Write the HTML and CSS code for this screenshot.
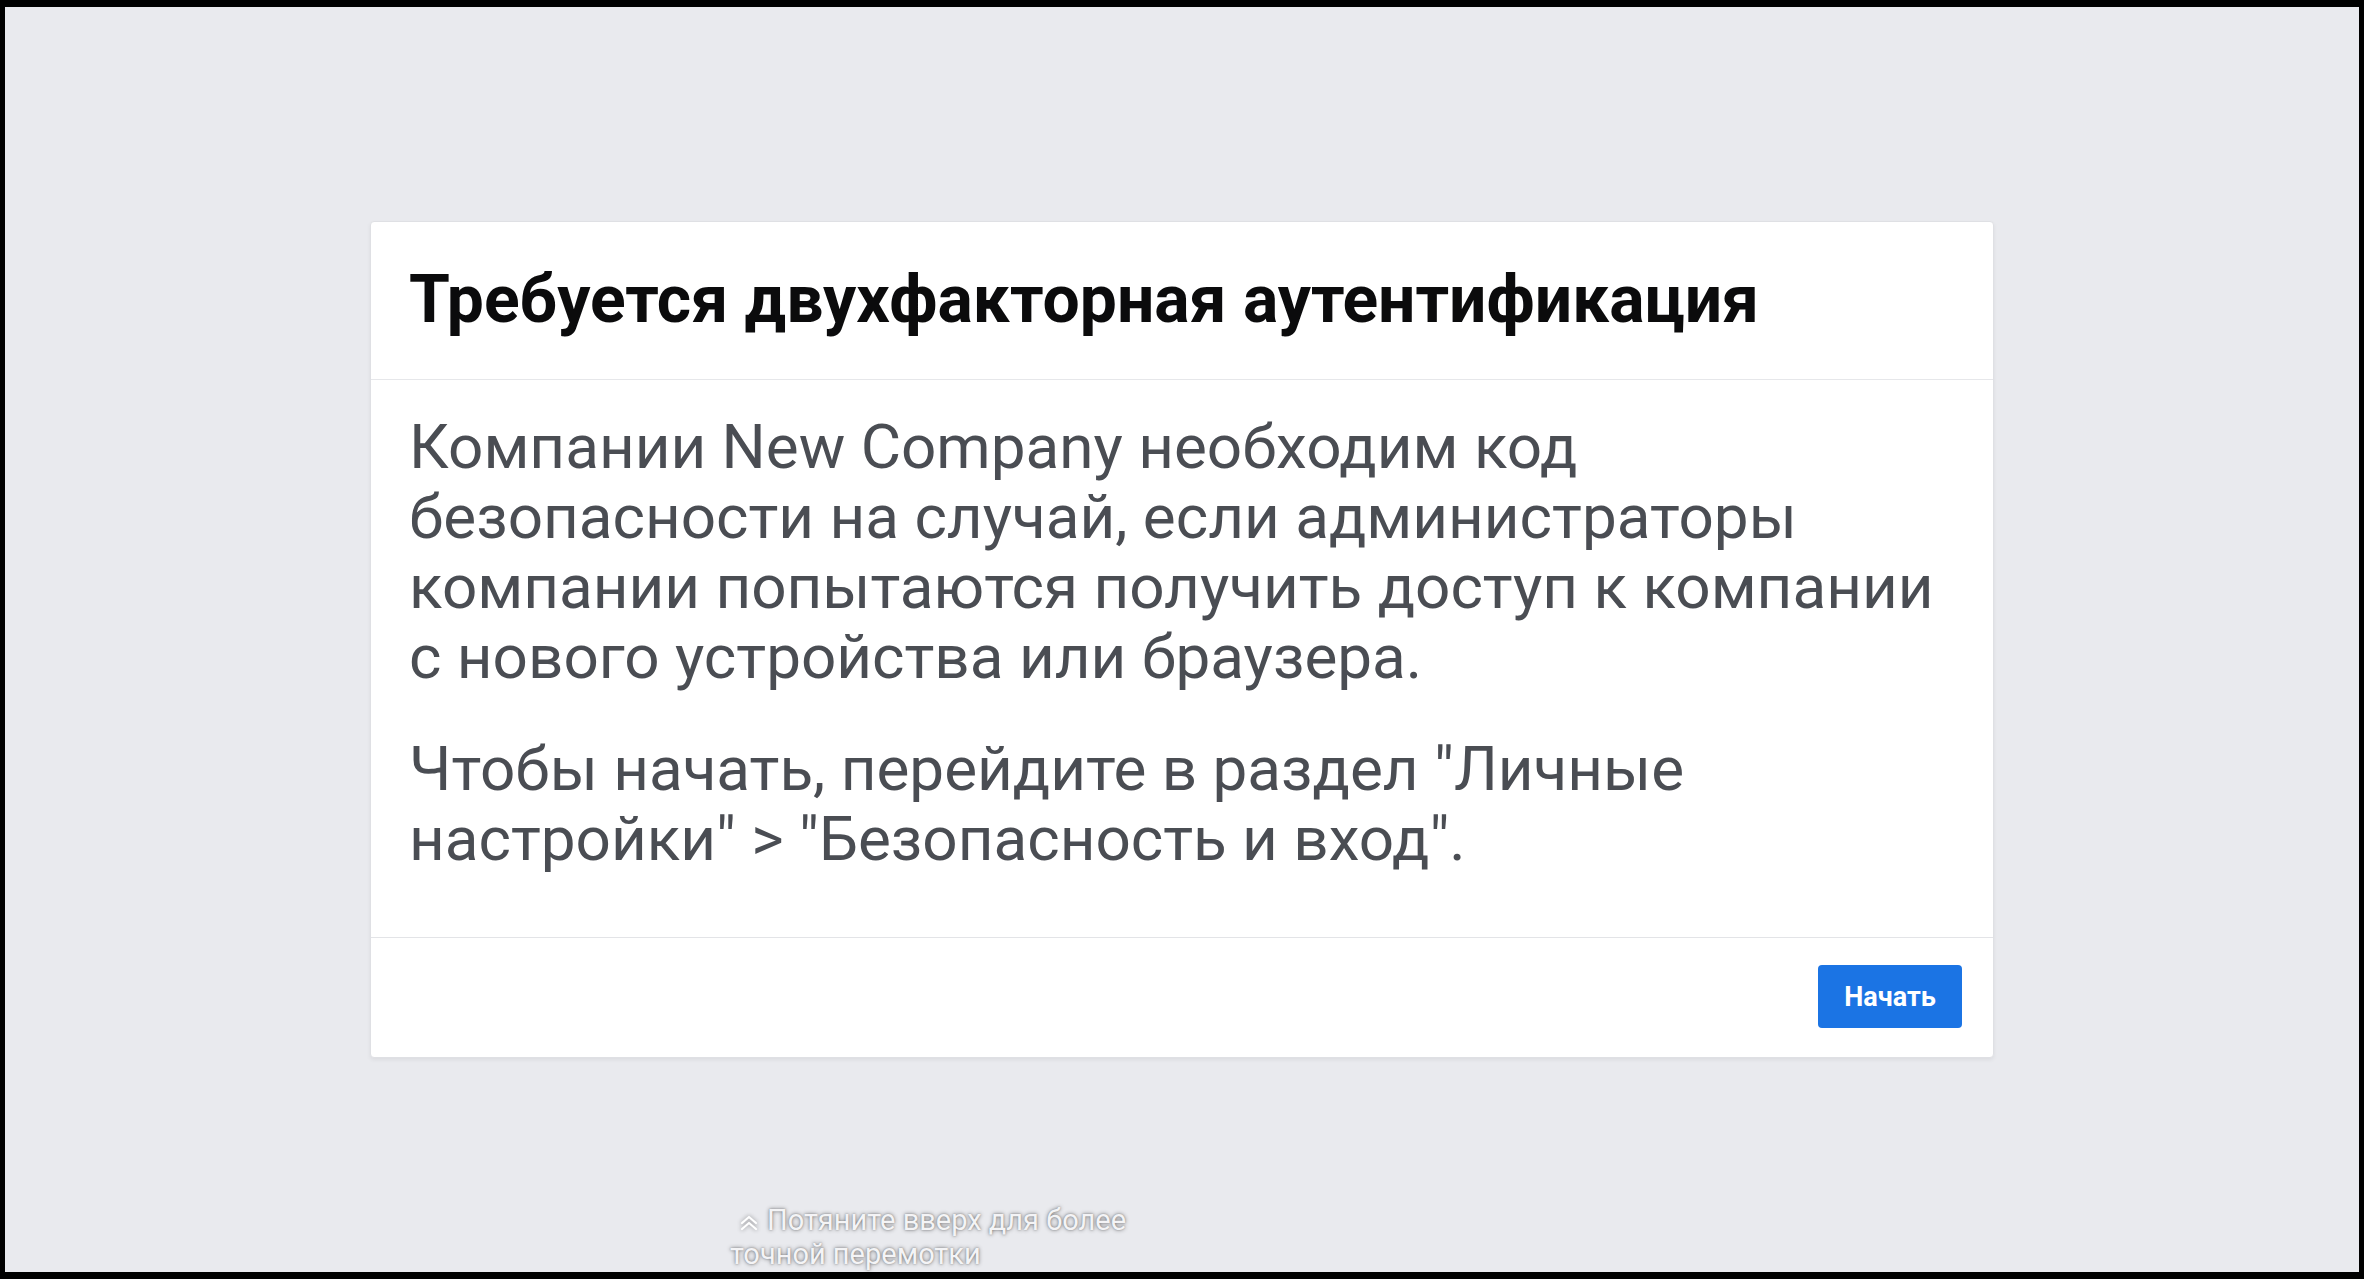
FILE: index.html
```html
<!DOCTYPE html>
<html lang="ru">
<head>
<meta charset="utf-8">
<title>Двухфакторная аутентификация</title>
<link rel="stylesheet" href="styles.css">
</head>
<body>
<div class="screen">
  <div class="stage">
    <section class="dialog">
      <header class="dialog-head">
        <h1 class="dialog-title">Требуется двухфакторная аутентификация</h1>
      </header>
      <div class="dialog-body">
        <p class="dialog-text">Компании New Company необходим код безопасности на случай, если администраторы компании попытаются получить доступ к компании с нового устройства или браузера.</p>
        <p class="dialog-text">Чтобы начать, перейдите в раздел "Личные настройки" &gt; "Безопасность и вход".</p>
      </div>
      <footer class="dialog-foot">
        <button class="btn-primary" type="button">Начать</button>
      </footer>
    </section>
  </div>
  <div class="seek-hint">
    <svg class="seek-icon" viewBox="0 0 18 16" width="18" height="16" aria-hidden="true">
      <polyline points="2,8 9,2 16,8" fill="none" stroke="#fff" stroke-width="2.2" stroke-linecap="round" stroke-linejoin="round"/>
      <polyline points="2,14 9,8 16,14" fill="none" stroke="#fff" stroke-width="2.2" stroke-linecap="round" stroke-linejoin="round"/>
    </svg>Потяните вверх для более точной перемотки
  </div>
</div>
</body>
</html>
```
FILE: styles.css
```css
html, body {
  margin: 0;
  padding: 0;
  height: 100%;
  background: #000;
}

body {
  font-family: Roboto, "Noto Sans", "Liberation Sans", sans-serif;
}

.screen {
  position: relative;
  height: 1279px;
  padding: 7px 5px;
  box-sizing: border-box;
  overflow: hidden;
}

.stage {
  height: 100%;
  background: #e9eaee;
  display: flex;
  justify-content: center;
  align-items: flex-start;
  padding-top: 214px;
  box-sizing: border-box;
}

.dialog {
  width: 1624px;
  box-sizing: border-box;
  background: #fff;
  border: 1px solid #dfe0e4;
  border-radius: 4px;
  box-shadow: 0 2px 4px rgba(0, 0, 0, 0.06);
}

.dialog-head {
  padding: 40px 38px 42px;
  border-bottom: 1px solid #e6e7ea;
}

.dialog-title {
  margin: 0;
  font-size: 66px;
  line-height: 75px;
  font-weight: 700;
  color: #0b0b0c;
}

.dialog-body {
  padding: 32px 38px 63px;
}

.dialog-text {
  margin: 0;
  font-size: 62px;
  line-height: 70px;
  font-weight: 400;
  color: #4a4d53;
  max-width: 1540px;
}

.dialog-text + .dialog-text {
  margin-top: 42px;
}

.dialog-foot {
  display: flex;
  justify-content: flex-end;
  padding: 27px 31px 29px;
  border-top: 1px solid #e3e4e7;
}

.btn-primary {
  width: 144px;
  height: 63px;
  border: 0;
  border-radius: 4px;
  background: #1b74e4;
  color: #fff;
  font-family: Roboto, "Liberation Sans", sans-serif;
  font-size: 27px;
  font-weight: 700;
  padding: 0;
}

.seek-hint {
  position: absolute;
  left: 730px;
  top: 1203px;
  width: 430px;
  font-size: 29px;
  line-height: 34px;
  color: #f4f4f6;
  text-shadow: 0 0 4px rgba(0, 0, 0, 0.45), 0 0 2px rgba(0, 0, 0, 0.3);
  text-indent: 10px;
}

.seek-icon {
  vertical-align: -1px;
  margin-right: 9px;
  filter: drop-shadow(0 0 2px rgba(0, 0, 0, 0.4));
}
```
